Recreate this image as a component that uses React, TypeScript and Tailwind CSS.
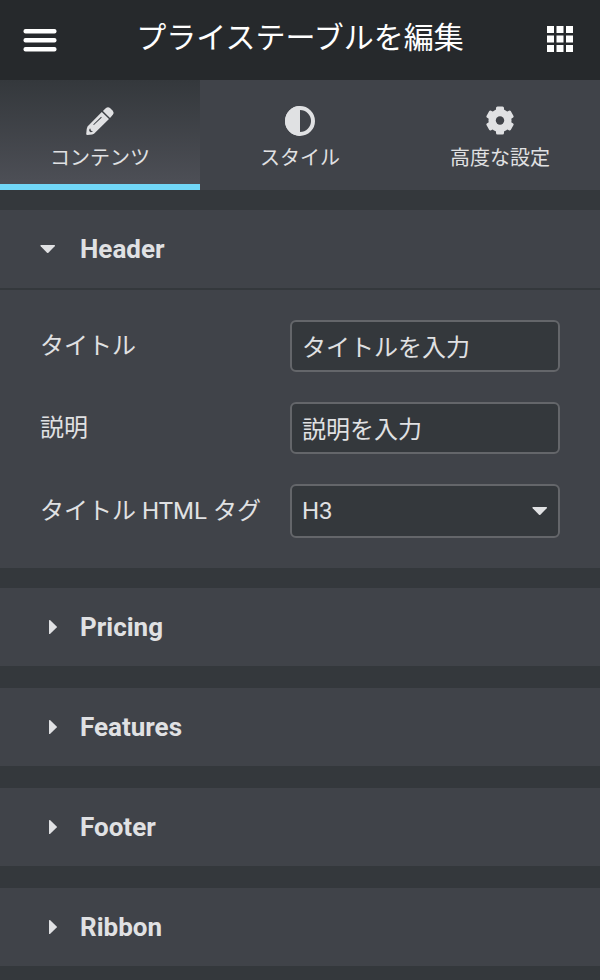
import { useState } from 'react';

const sections = ['Pricing', 'Features', 'Footer', 'Ribbon'];

function PencilIcon() {
  return (
    <svg viewBox="0 0 30 30" className="size-[30px]" fill="currentColor" aria-hidden="true">
      <path
        fillRule="evenodd"
        d="M16.8 5.9 24 13 9 27.7 7.2 28.6 2.4 29Q1.2 29 1.2 28L1.7 23 2.5 20.6ZM4.9 22.6 4.1 23.9 4.4 25.2 5.6 26.2 7 26 8 25.2 6.6 24.9 5.7 24.1 5.5 22.8ZM16.1 10.7 8.2 18.4 8.9 19.1 16.8 11.4Z"
      />
      <path d="M17.9 4.9 21 2Q23 .4 25 2L27.8 4.8Q29.4 6.8 27.8 8.8L25 11.9Z" />
    </svg>
  );
}

function ContrastIcon() {
  return (
    <svg viewBox="0 0 30 30" className="size-[30px]" aria-hidden="true">
      <circle cx="15" cy="15" r="13" fill="none" stroke="currentColor" strokeWidth="4" />
      <path d="M15 0A15 15 0 0 0 15 30Z" fill="currentColor" />
    </svg>
  );
}

function GearIcon() {
  return (
    <svg viewBox="0 0 30 30" className="size-[30px]" aria-hidden="true">
      <g fill="currentColor">
        <rect x="11" y=".5" width="8" height="28" rx="1.5" />
        <rect x="11" y=".5" width="8" height="28" rx="1.5" transform="rotate(60 15 14.5)" />
        <rect x="11" y=".5" width="8" height="28" rx="1.5" transform="rotate(120 15 14.5)" />
        <circle cx="15" cy="14.5" r="11.5" />
      </g>
      <circle cx="15" cy="14.5" r="4.2" fill="#404349" />
    </svg>
  );
}

const tabs = [
  { label: 'コンテンツ', icon: <PencilIcon /> },
  { label: 'スタイル', icon: <ContrastIcon /> },
  { label: '高度な設定', icon: <GearIcon /> },
];

function CaretDown() {
  return (
    <svg viewBox="0 0 16 10" className="h-[10px] w-4" fill="currentColor" aria-hidden="true">
      <path d="M1 1H14.4Q15.5 1.2 14.7 2.3L8.4 8.8Q7.7 9.4 7 8.8L.7 2.3Q-.1 1.2 1 1Z" />
    </svg>
  );
}

function CaretRight() {
  return (
    <svg viewBox="0 0 10 16" className="h-4 w-[10px]" fill="currentColor" aria-hidden="true">
      <path d="M1 1.6Q1.1 .6 2 1.1L8.7 7.4Q9.3 8 8.7 8.6L2 14.9Q1.1 15.4 1 14.4Z" />
    </svg>
  );
}

export default function App() {
  const [active, setActive] = useState(0);
  const [tag, setTag] = useState('H3');

  return (
    <main className="min-h-screen bg-[#34383c] font-[Roboto,'Noto_Sans_CJK_JP',sans-serif] text-[#e0e1e3]" lang="ja">
      <header className="flex h-20 items-center justify-between bg-[#26292c] px-5 text-white">
        <button type="button" aria-label="メニュー" className="flex size-10 items-center justify-center">
          <svg viewBox="0 0 34 24" className="h-6 w-[34px]" fill="currentColor" aria-hidden="true">
            <rect x="0.5" y="1" width="33" height="4.5" rx="2" />
            <rect x="0.5" y="10" width="33" height="4.5" rx="2" />
            <rect x="0.5" y="19" width="33" height="4.5" rx="2" />
          </svg>
        </button>
        <h1 className="pb-1 text-[30px] leading-9">プライステーブルを編集</h1>
        <button type="button" aria-label="ウィジェット" className="flex size-10 items-center justify-center">
          <svg viewBox="0 0 26 28" className="h-7 w-[26px]" fill="currentColor" aria-hidden="true">
            {[0, 9.5, 19].map(y =>
              [0, 9.5, 19].map(x => <rect key={`${x}-${y}`} x={x} y={y} width="7" height="7" />)
            )}
          </svg>
        </button>
      </header>

      <nav className="grid grid-cols-3 bg-[#404349]">
        {tabs.map((tab, i) => (
          <button
            key={tab.label}
            type="button"
            onClick={() => setActive(i)}
            className={`flex h-[110px] flex-col items-center border-b-6 pt-[26px] ${
              active === i
                ? 'border-[#71d7f7] bg-linear-to-b from-[#34383c] to-[#4d4f56]'
                : 'border-transparent'
            }`}
          >
            {tab.icon}
            <span className="mt-2 text-xl leading-7">{tab.label}</span>
          </button>
        ))}
      </nav>

      <section className="mt-5 bg-[#404349]">
        <h2 className="border-b-2 border-[#34383c]">
          <button type="button" aria-expanded="true" className="flex h-[78px] w-full items-center pl-10 text-[26px] font-bold">
            <span className="flex w-10"><CaretDown /></span>
            Header
          </button>
        </h2>
        {/* Header controls */}
        <div className="flex flex-col gap-[30px] px-10 py-[30px] text-2xl">
          <div className="flex items-center justify-between">
            <label htmlFor="title">タイトル</label>
            <input
              id="title"
              type="text"
              defaultValue="タイトルを入力"
              className="h-[52px] w-[270px] rounded-md border-2 border-[#64666a] bg-[#34383c] px-2.5 pb-0.5"
            />
          </div>
          <div className="flex items-center justify-between">
            <label htmlFor="description">説明</label>
            <input
              id="description"
              type="text"
              defaultValue="説明を入力"
              className="h-[52px] w-[270px] rounded-md border-2 border-[#64666a] bg-[#34383c] px-2.5 pb-0.5"
            />
          </div>
          <div className="flex items-center justify-between">
            <label htmlFor="tag">タイトル HTML タグ</label>
            <div className="relative w-[270px]">
              <select
                id="tag"
                value={tag}
                onChange={e => setTag(e.target.value)}
                className="block h-[54px] w-full appearance-none rounded-md border-2 border-[#64666a] bg-[#34383c] px-2.5"
              >
                {['H1', 'H2', 'H3', 'H4', 'H5', 'H6'].map(h => (
                  <option key={h}>{h}</option>
                ))}
              </select>
              <span className="pointer-events-none absolute inset-y-0 right-3 flex items-center">
                <CaretDown />
              </span>
            </div>
          </div>
        </div>
      </section>

      <div className="mt-5 flex flex-col gap-[22px] pb-3.5">
        {sections.map(name => (
          <h2 key={name} className="bg-[#404349]">
            <button type="button" aria-expanded="false" className="flex h-[78px] w-full items-center pl-10 text-[26px] font-bold">
              <span className="flex w-10 pl-2"><CaretRight /></span>
              {name}
            </button>
          </h2>
        ))}
      </div>
    </main>
  );
}
